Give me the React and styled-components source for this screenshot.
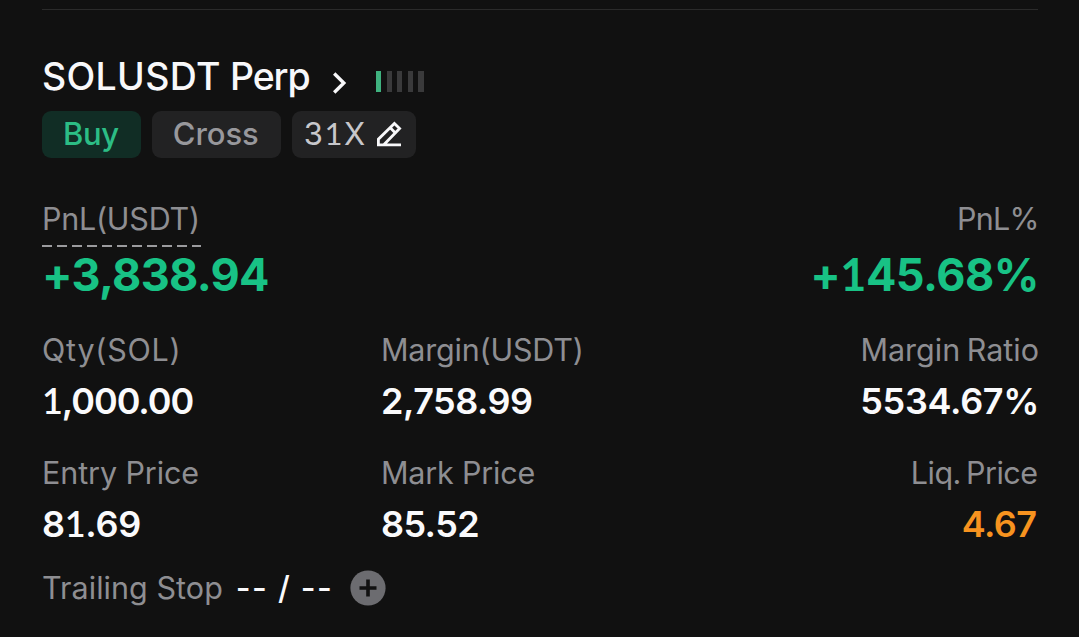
import React from "react";
import styled, { createGlobalStyle } from "styled-components";

const GlobalStyle = createGlobalStyle`
  * { box-sizing: border-box; }
  body { margin: 0; background: #111111; }
`;

const Card = styled.main`
  width: 1079px;
  height: 637px;
  padding: 9px 41px 0 42px;
  overflow: hidden;
  background: #111111;
  font-family: Inter, "Liberation Sans", sans-serif;
  white-space: nowrap;
`;

const Divider = styled.div`
  height: 1px;
  background: #2b2b2b;
`;

const Header = styled.header`
  display: flex;
  align-items: center;
  height: 48px;
  margin-top: 43px;
`;

const Text = styled.span`
  display: block;
  letter-spacing: ${(p) => p.$track || 0}px;
  word-spacing: ${(p) => p.$word || 0}px;
  margin-right: ${(p) => -(p.$track || 0) - (p.$nudge || 0)}px;
`;

const Title = styled(Text)`
  font-size: 37.5px;
  line-height: 48px;
  font-weight: 500;
  color: #f8f8fa;
`;

const Kind = styled.span`
  letter-spacing: -1.1px;
`;

const Chevron = styled.svg`
  display: block;
  width: 16px;
  height: 24px;
  margin: 12px 0 0 22.3px;
`;

const Signal = styled.div`
  display: flex;
  gap: 5.4px;
  margin: 9px 0 0 28.5px;
`;

const Bar = styled.i`
  width: 5.2px;
  height: 21px;
  background: ${(p) => (p.$on ? "#3fb27f" : "#3a3a3b")};
`;

const Tags = styled.div`
  display: flex;
  gap: 11px;
  margin-top: 10px;
`;

const Tag = styled.div`
  display: flex;
  align-items: center;
  justify-content: center;
  width: ${(p) => p.$width}px;
  height: 47px;
  border-radius: 9px;
  font-size: 31px;
  line-height: 46px;
  padding: 0 ${(p) => p.$shift || 0}px 1px 0;
  color: ${(p) => p.$color};
  background: ${(p) => p.$bg || "#222223"};
  font-weight: ${(p) => p.$weight || 400};
`;

const EditIcon = styled.svg`
  display: block;
  width: 26px;
  height: 26px;
  margin-left: 11px;
`;

const Row = styled.section`
  display: grid;
  grid-template-columns: 339px 1fr auto;
  margin-top: ${(p) => p.$top}px;
`;

const Cell = styled.div`
  display: flex;
  flex-direction: column;
  align-items: ${(p) => (p.$end ? "flex-end" : "flex-start")};
  ${(p) => p.$end && "grid-column: 3;"}
`;

const Label = styled(Text)`
  font-size: 30.5px;
  line-height: 40px;
  font-weight: 400;
  color: #8e8e92;
`;

const Dashes = styled.div`
  width: 159px;
  height: 2px;
  margin: 6px 0 -8px;
  background: repeating-linear-gradient(90deg, #9b9b9e 0 10px, transparent 10px 15px);
`;

const Amount = styled(Text)`
  margin-top: 8px;
  font-size: 45px;
  line-height: 56px;
  font-weight: 700;
  color: #18c285;
`;

const Value = styled(Text)`
  margin-top: 8px;
  font-size: 36px;
  line-height: 46px;
  font-weight: 600;
  color: ${(p) => (p.$warn ? "#f7931f" : "#fafafc")};
`;

const FootedOne = styled.span`
  font-family: Lato, Inter, sans-serif;
  line-height: 1;
`;

const Footer = styled.footer`
  display: flex;
  align-items: center;
  height: 40px;
  margin-top: 21px;
`;

const Empty = styled(Text)`
  margin-left: 13px;
  font-size: 32px;
  line-height: 40px;
  font-weight: 500;
  color: #fafafc;
`;

const AddIcon = styled.svg`
  display: block;
  width: 36px;
  height: 36px;
  margin-left: 18.5px;
`;

function Digits({ children }) {
  return children
    .split(/(1)/)
    .map((part, i) => (part === "1" ? <FootedOne key={i}>1</FootedOne> : part));
}

function Stat({ label, value, labelTrack, labelWord, labelNudge, valueTrack, valueNudge, end, warn }) {
  return (
    <Cell $end={end}>
      <Label $track={labelTrack} $word={labelWord} $nudge={labelNudge}>
        {label}
      </Label>
      <Value $track={valueTrack} $nudge={valueNudge} $warn={warn}>
        <Digits>{value}</Digits>
      </Value>
    </Cell>
  );
}

export default function App() {
  return (
    <Card>
      <GlobalStyle />
      <Divider />
      <Header>
        <Title $track={0.3} $word={-1}>
          SOLUSDT <Kind>Perp</Kind>
        </Title>
        <Chevron viewBox="0 0 16 24" fill="none" stroke="#f8f8fa" strokeWidth="3.4">
          <path d="M2.2 2.5 11.8 12 2.2 21.5" />
        </Chevron>
        <Signal>
          <Bar $on />
          <Bar />
          <Bar />
          <Bar />
          <Bar />
        </Signal>
      </Header>
      <Tags>
        <Tag $width={99} $color="#2cbd85" $bg="#112d25" $weight={500} $shift={1}>
          <Text $track={-0.3}>Buy</Text>
        </Tag>
        <Tag $width={129} $color="#98989c" $weight={500} $shift={1.5}>
          <Text $track={-0.1}>Cross</Text>
        </Tag>
        <Tag $width={124} $color="#c7c7cb" $shift={2}>
          <Text $track={1.6}>
            <Digits>31X</Digits>
          </Text>
          <EditIcon viewBox="0 0 26 26" fill="none" stroke="#f8f8fa" strokeWidth="2.8">
            <path d="M2.4 23.8V18.2L18.4 2.4 23.6 7.6 7.8 23.8M1 23.8H25M14 6.6 19.4 12" />
          </EditIcon>
        </Tag>
      </Tags>
      <Row $top={41}>
        <Cell>
          <Label $track={-0.25}>PnL(USDT)</Label>
          <Dashes />
          <Amount $track={-0.7}>
            <Digits>+3,838.94</Digits>
          </Amount>
        </Cell>
        <Cell $end>
          <Label $track={-0.7} $nudge={1.5}>
            PnL%
          </Label>
          <Amount $track={-0.5} $nudge={1.5}>
            <Digits>+145.68%</Digits>
          </Amount>
        </Cell>
      </Row>
      <Row $top={27}>
        <Stat label="Qty(SOL)" value="1,000.00" labelTrack={0.75} valueTrack={-1.05} />
        <Stat label="Margin(USDT)" value="2,758.99" labelTrack={-0.2} valueTrack={-0.5} />
        <Stat
          label="Margin Ratio"
          value="5534.67%"
          labelTrack={0}
          labelWord={-2}
          labelNudge={1}
          valueTrack={-0.3}
          valueNudge={1.5}
          end
        />
      </Row>
      <Row $top={29}>
        <Stat label="Entry Price" value="81.69" labelTrack={-0.1} valueTrack={-0.3} />
        <Stat label="Mark Price" value="85.52" labelTrack={-0.2} valueTrack={-0.6} />
        <Stat
          label="Liq. Price"
          value="4.67"
          labelTrack={-0.5}
          labelWord={-3}
          valueTrack={-0.6}
          valueNudge={-1}
          end
          warn
        />
      </Row>
      <Footer>
        <Label $track={0.05}>Trailing Stop</Label>
        <Empty $track={1.3}>-- / --</Empty>
        <AddIcon viewBox="0 0 36 36">
          <circle cx="18" cy="18" r="17.6" fill="#6c6c70" />
          <path d="M18 9.5V26.5M9.5 18H26.5" stroke="#111111" strokeWidth="3.6" />
        </AddIcon>
      </Footer>
    </Card>
  );
}
